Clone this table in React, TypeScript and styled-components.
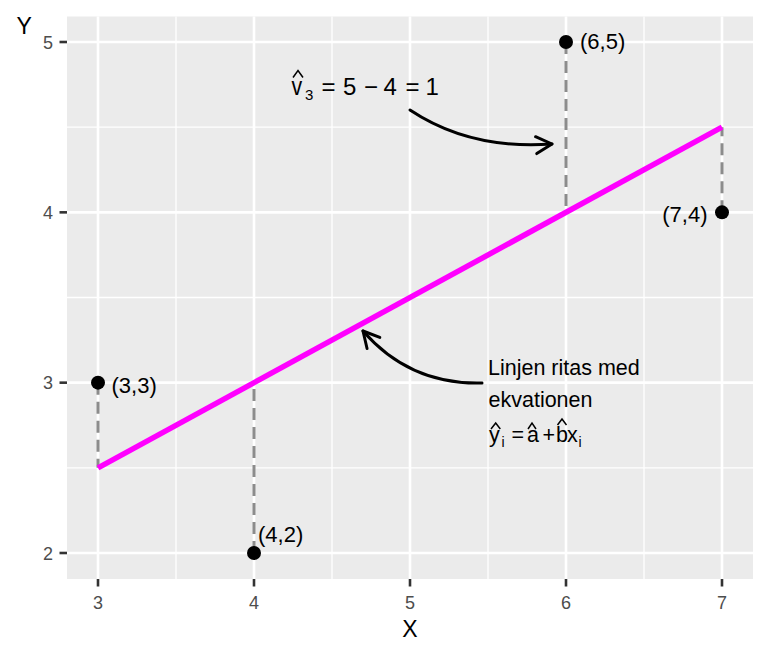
import React from 'react';
import styled, { createGlobalStyle } from 'styled-components';

const GlobalStyle = createGlobalStyle`
  html, body {
    margin: 0;
    padding: 0;
    background: #ffffff;
  }
`;

const Figure = styled.div`
  width: 770px;
  height: 660px;
  background: #ffffff;
  font-family: "Liberation Sans", Arial, sans-serif;
`;

const Plot = styled.svg`
  display: block;
  font-family: "Liberation Sans", Arial, sans-serif;
`;

const Panel = styled.rect`
  fill: #ebebeb;
`;

const GridLine = styled.line<{ $minor?: boolean }>`
  stroke: #ffffff;
  stroke-width: ${props => (props.$minor ? 1.3 : 2.6)};
`;

const Tick = styled.line`
  stroke: #333333;
  stroke-width: 2.6;
`;

const TickLabel = styled.text`
  font-size: 18px;
  fill: #4d4d4d;
`;

const AxisTitle = styled.text`
  font-size: 23px;
  fill: #000000;
`;

const Residual = styled.line`
  stroke: #8c8c8c;
  stroke-width: 3;
  stroke-dasharray: 12 7;
`;

const FitLine = styled.line`
  stroke: #ff00ff;
  stroke-width: 5.5;
`;

const Point = styled.circle`
  fill: #000000;
`;

const PointLabel = styled.text`
  font-size: 22px;
  fill: #000000;
`;

const Note = styled.text<{ $size?: number }>`
  font-size: ${props => props.$size ?? 21.5}px;
  fill: #000000;
`;

const Sub = styled.tspan<{ $size?: number }>`
  font-size: ${props => props.$size ?? 14}px;
`;

const Hat = styled.polyline`
  fill: none;
  stroke: #000000;
  stroke-width: 1.5;
`;

const Curve = styled.path`
  fill: none;
  stroke: #000000;
  stroke-width: 3;
  stroke-linecap: round;
  stroke-linejoin: round;
`;

// data -> pixel
const sx = (v: number) => 98 + (v - 3) * 156;
const sy = (v: number) => 553 - (v - 2) * 170.33;

const points = [
  { x: 3, y: 3, fit: 2.5, label: '(3,3)', dx: 13.5, dy: 10.5, anchor: 'start' },
  { x: 4, y: 2, fit: 3, label: '(4,2)', dx: 4, dy: -11.5, anchor: 'start' },
  { x: 6, y: 5, fit: 4, label: '(6,5)', dx: 14, dy: 6.5, anchor: 'start' },
  { x: 7, y: 4, fit: 4.5, label: '(7,4)', dx: -14.5, dy: 9.5, anchor: 'end' },
];

type Pt = [number, number];

const CurvedArrow: React.FC<{ from: Pt; ctrl: Pt; to: Pt }> = ({ from, ctrl, to }) => {
  const back = Math.atan2(ctrl[1] - to[1], ctrl[0] - to[0]);
  const len = 18;
  const spread = (28 * Math.PI) / 180;
  const a1: Pt = [to[0] + len * Math.cos(back + spread), to[1] + len * Math.sin(back + spread)];
  const a2: Pt = [to[0] + len * Math.cos(back - spread), to[1] + len * Math.sin(back - spread)];
  return (
    <g>
      <Curve d={`M${from[0]},${from[1]} Q${ctrl[0]},${ctrl[1]} ${to[0]},${to[1]}`} />
      <Curve d={`M${a1[0]},${a1[1]} L${to[0]},${to[1]} L${a2[0]},${a2[1]}`} />
    </g>
  );
};

const xMajor = [3, 4, 5, 6, 7];
const xMinor = [3.5, 4.5, 5.5, 6.5];
const yMajor = [2, 3, 4, 5];
const yMinor = [2.5, 3.5, 4.5];

const PANEL = { left: 67, top: 16.5, right: 753, bottom: 579 };

export default function App() {
  return (
    <Figure>
      <GlobalStyle />
      <Plot width={770} height={660} viewBox="0 0 770 660">
        <Panel
          x={PANEL.left}
          y={PANEL.top}
          width={PANEL.right - PANEL.left}
          height={PANEL.bottom - PANEL.top}
        />
        {yMinor.map(v => (
          <GridLine key={`ym${v}`} $minor x1={PANEL.left} x2={PANEL.right} y1={sy(v)} y2={sy(v)} />
        ))}
        {xMinor.map(v => (
          <GridLine key={`xm${v}`} $minor x1={sx(v)} x2={sx(v)} y1={PANEL.top} y2={PANEL.bottom} />
        ))}
        {yMajor.map(v => (
          <GridLine key={`y${v}`} x1={PANEL.left} x2={PANEL.right} y1={sy(v)} y2={sy(v)} />
        ))}
        {xMajor.map(v => (
          <GridLine key={`x${v}`} x1={sx(v)} x2={sx(v)} y1={PANEL.top} y2={PANEL.bottom} />
        ))}

        {/* axes */}
        {yMajor.map(v => (
          <g key={`yt${v}`}>
            <Tick x1={59.5} x2={PANEL.left} y1={sy(v)} y2={sy(v)} />
            <TickLabel x={53} y={sy(v) + 6.6} textAnchor="end">{v}</TickLabel>
          </g>
        ))}
        {xMajor.map(v => (
          <g key={`xt${v}`}>
            <Tick x1={sx(v)} x2={sx(v)} y1={PANEL.bottom} y2={586.5} />
            <TickLabel x={sx(v)} y={609} textAnchor="middle">{v}</TickLabel>
          </g>
        ))}
        <AxisTitle x={410} y={637.3} textAnchor="middle">X</AxisTitle>
        <AxisTitle x={16.5} y={34}>Y</AxisTitle>

        {/* residuals, fitted line, observations */}
        {points.map(p => (
          <Residual key={`r${p.label}`} x1={sx(p.x)} x2={sx(p.x)} y1={sy(p.y)} y2={sy(p.fit)} />
        ))}
        <FitLine x1={sx(3)} y1={sy(2.5)} x2={sx(7)} y2={sy(4.5)} />
        {points.map(p => (
          <g key={`p${p.label}`}>
            <Point cx={sx(p.x)} cy={sy(p.y)} r={7} />
            <PointLabel
              x={sx(p.x) + p.dx}
              y={sy(p.y) + p.dy}
              textAnchor={p.anchor as 'start' | 'end'}
            >
              {p.label}
            </PointLabel>
          </g>
        ))}

        {/* residual annotation */}
        <Note $size={26} transform="translate(291.5,95.3) scale(0.82,1)">v</Note>
        <Hat points="293,77.5 298,70.5 303,77.5" />
        <Note $size={24} y={95.3}>
          <Sub $size={15} x={305} y={100}>3</Sub>
          <tspan x={321.5} y={95.3}>=</tspan>
          <tspan x={343}>5</tspan>
          <tspan x={364}>−</tspan>
          <tspan x={383.5}>4</tspan>
          <tspan x={405.5}>=</tspan>
          <tspan x={425.5}>1</tspan>
        </Note>
        <CurvedArrow from={[410, 110]} ctrl={[470, 150]} to={[552, 144]} />

        {/* line equation annotation */}
        <Note x={488} y={375}>Linjen ritas med</Note>
        <Note x={488.5} y={407}>ekvationen</Note>
        <Note y={441.5}>
          <tspan x={489}>y</tspan>
          <Sub x={501.5} y={446.5}>i</Sub>
          <tspan x={511.5} y={441.5}>=</tspan>
          <tspan x={527}>a</tspan>
          <tspan x={542.5}>+</tspan>
          <tspan x={556}>b</tspan>
          <tspan x={567}>x</tspan>
          <Sub x={578.5} y={446.5}>i</Sub>
        </Note>
        <Hat points="491,429 495.7,423 500.3,429" />
        <Hat points="528,429 532,423 536,429" />
        <Hat points="557.5,425 562,419 566.5,425" />
        <CurvedArrow from={[482, 383]} ctrl={[410, 385]} to={[363, 331]} />
      </Plot>
    </Figure>
  );
}
